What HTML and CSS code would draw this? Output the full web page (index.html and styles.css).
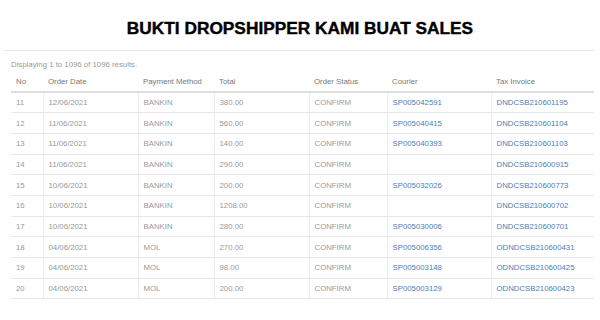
FILE: index.html
```html
<!DOCTYPE html>
<html>
<head>
<meta charset="utf-8">
<link rel="stylesheet" href="styles.css">
</head>
<body>
<h1 class="title">BUKTI DROPSHIPPER KAMI BUAT SALES</h1>
<hr class="rule">
<p class="summary">Displaying 1 to 1096 of 1096 results.</p>
<table class="orders">
  <colgroup>
    <col class="c-no"><col class="c-date"><col class="c-pay"><col class="c-total"><col class="c-status"><col class="c-courier"><col class="c-tax">
  </colgroup>
  <thead>
    <tr><th>No</th><th>Order Date</th><th>Payment Method</th><th>Total</th><th>Order Status</th><th>Courier</th><th>Tax Invoice</th></tr>
  </thead>
  <tbody>
    <tr><td>11</td><td>12/06/2021</td><td>BANKIN</td><td>380.00</td><td>CONFIRM</td><td><a href="#">SP005042591</a></td><td><a href="#">DNDCSB210601195</a></td></tr>
    <tr><td>12</td><td>11/06/2021</td><td>BANKIN</td><td>560.00</td><td>CONFIRM</td><td><a href="#">SP005040415</a></td><td><a href="#">DNDCSB210601104</a></td></tr>
    <tr><td>13</td><td>11/06/2021</td><td>BANKIN</td><td>140.00</td><td>CONFIRM</td><td><a href="#">SP005040393</a></td><td><a href="#">DNDCSB210601103</a></td></tr>
    <tr><td>14</td><td>11/06/2021</td><td>BANKIN</td><td>290.00</td><td>CONFIRM</td><td></td><td><a href="#">DNDCSB210600915</a></td></tr>
    <tr><td>15</td><td>10/06/2021</td><td>BANKIN</td><td>200.00</td><td>CONFIRM</td><td><a href="#">SP005032026</a></td><td><a href="#">DNDCSB210600773</a></td></tr>
    <tr><td>16</td><td>10/06/2021</td><td>BANKIN</td><td>1208.00</td><td>CONFIRM</td><td></td><td><a href="#">DNDCSB210600702</a></td></tr>
    <tr><td>17</td><td>10/06/2021</td><td>BANKIN</td><td>280.00</td><td>CONFIRM</td><td><a href="#">SP005030006</a></td><td><a href="#">DNDCSB210600701</a></td></tr>
    <tr><td>18</td><td>04/06/2021</td><td>MOL</td><td>270.00</td><td>CONFIRM</td><td><a href="#">SP005006356</a></td><td><a href="#">ODNDCSB210600431</a></td></tr>
    <tr><td>19</td><td>04/06/2021</td><td>MOL</td><td>98.00</td><td>CONFIRM</td><td><a href="#">SP005003148</a></td><td><a href="#">ODNDCSB210600425</a></td></tr>
    <tr><td>20</td><td>04/06/2021</td><td>MOL</td><td>200.00</td><td>CONFIRM</td><td><a href="#">SP005003129</a></td><td><a href="#">ODNDCSB210600423</a></td></tr>
  </tbody>
</table>
</body>
</html>
```
FILE: styles.css
```css
html, body {
  margin: 0;
  padding: 0;
  background: #ffffff;
}
body {
  font-family: "Liberation Sans", Arial, sans-serif;
  width: 600px;
  height: 320px;
  overflow: hidden;
}
.title {
  margin: 0;
  padding-top: 18px;
  font-size: 17.3px;
  line-height: 20px;
  font-weight: 700;
  text-align: center;
  color: #000;
  -webkit-text-stroke: 0.4px #000;
}
.rule {
  margin: 12px 6px 0 4px;
  border: 0;
  border-top: 1px solid #e6e6e6;
  height: 0;
}
.summary {
  margin: 8px 0 0 11px;
  font-size: 7.8px;
  line-height: 12px;
  color: #9a9a9a;
}
.orders {
  margin-left: 11px;
  width: 583px;
  table-layout: fixed;
  border-collapse: collapse;
  font-size: 7.8px;
}
.c-no { width: 32px; }
.c-date { width: 95px; }
.c-pay { width: 76px; }
.c-total { width: 95px; }
.c-status { width: 78px; }
.c-courier { width: 104px; }
.c-tax { width: 103px; }
.orders th {
  height: 20px;
  padding: 0 5px;
  text-align: left;
  font-weight: 400;
  color: #777;
  border-bottom: 2px solid #dedede;
  vertical-align: middle;
}
.orders tbody tr {
  height: 20.7px;
}
.orders td {
  padding: 0 5px;
  color: #999;
  border-bottom: 1px solid #e8e8e8;
  border-left: 1px solid #ececec;
  vertical-align: middle;
  white-space: nowrap;
}
.orders td:first-child {
  border-left: 0;
}
.orders a {
  color: #4a80b6;
  text-decoration: none;
}
```
